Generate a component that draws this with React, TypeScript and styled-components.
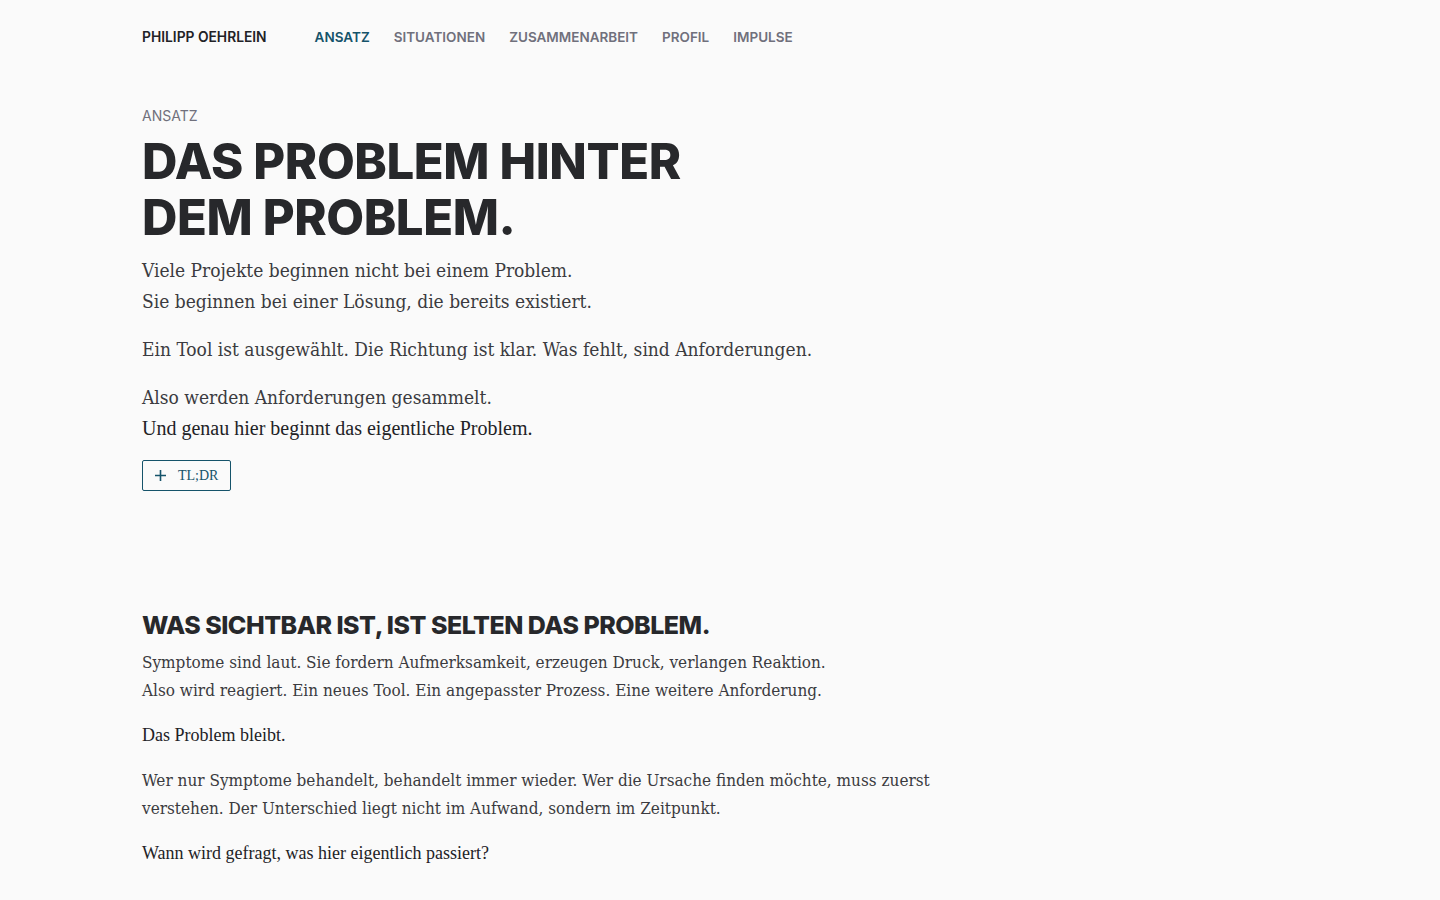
import styled, { createGlobalStyle } from "styled-components";

const GlobalStyle = createGlobalStyle`
    html, body {
        margin: 0;
        padding: 0;
        background: #fafafa;
    }

    body {
        font-family: "DejaVu Serif Condensed", "DejaVu Serif", serif;
        color: #3b3b40;
    }

    * {
        box-sizing: border-box;
    }
`;

const navItems = ["Ansatz", "Situationen", "Zusammenarbeit", "Profil", "Impulse"];

const App = () => {
    return (
        <>
            <GlobalStyle/>
            <Page>
                <Header>
                    <Brand>Philipp Oehrlein</Brand>
                    <Nav>
                        {navItems.map((item, idx) => (
                            <NavLink key={item} $active={idx === 0}>{item}</NavLink>
                        ))}
                    </Nav>
                </Header>

                <Intro>
                    <Eyebrow>Ansatz</Eyebrow>
                    <Headline>Das Problem hinter<br/>dem Problem.</Headline>
                    <Lead>
                        <LeadPara>
                            Viele Projekte beginnen nicht bei einem Problem.<br/>
                            Sie beginnen bei einer Lösung, die bereits existiert.
                        </LeadPara>
                        <LeadPara>
                            Ein Tool ist ausgewählt. Die Richtung ist klar. Was fehlt, sind Anforderungen.
                        </LeadPara>
                        <LeadPara>
                            Also werden Anforderungen gesammelt.<br/>
                            <Emphasis $size={20}>Und genau hier beginnt das eigentliche Problem.</Emphasis>
                        </LeadPara>
                    </Lead>
                    <TldrButton type="button">
                        <svg width="11" height="11" viewBox="0 0 11 11" fill="none">
                            <path d="M5.5 0v11M0 5.5h11" stroke="currentColor" strokeWidth="1.6"/>
                        </svg>
                        TL;DR
                    </TldrButton>
                </Intro>

                <Section>
                    <SectionTitle>Was sichtbar ist, ist selten das Problem.</SectionTitle>
                    <Body>
                        <BodyPara>
                            Symptome sind laut. Sie fordern Aufmerksamkeit, erzeugen Druck, verlangen Reaktion.<br/>
                            Also wird reagiert. Ein neues Tool. Ein angepasster Prozess. Eine weitere Anforderung.
                        </BodyPara>
                        <BodyPara><Emphasis $size={18}>Das Problem bleibt.</Emphasis></BodyPara>
                        <BodyPara>
                            Wer nur Symptome behandelt, behandelt immer wieder. Wer die Ursache finden möchte, muss zuerst
                            verstehen. Der Unterschied liegt nicht im Aufwand, sondern im Zeitpunkt.
                        </BodyPara>
                        <BodyPara><Emphasis $size={18}>Wann wird gefragt, was hier eigentlich passiert?</Emphasis></BodyPara>
                    </Body>
                </Section>
            </Page>
        </>
    );
};

export default App;

const Page = styled.div`
    padding: 0 142px;
    min-height: 900px;
`;

const Header = styled.header`
    display: flex;
    align-items: center;
    height: 74px;
    gap: 48px;
`;

const Brand = styled.div`
    font-family: Inter, "Liberation Sans", sans-serif;
    font-weight: 600;
    font-size: 13.8px;
    text-transform: uppercase;
    color: #222226;
`;

const Nav = styled.nav`
    display: flex;
    gap: 24px;
`;

const NavLink = styled.a<{ $active?: boolean }>`
    font-family: Inter, "Liberation Sans", sans-serif;
    font-weight: 600;
    font-size: 13.5px;
    text-transform: uppercase;
    color: ${({$active}) => ($active ? "#15536a" : "#70707c")};
    cursor: pointer;
`;

const Intro = styled.section`
    padding-top: 33px;
    max-width: 800px;
`;

const Eyebrow = styled.div`
    font-family: Inter, "Liberation Sans", sans-serif;
    font-size: 14px;
    text-transform: uppercase;
    color: #70707c;
    margin-bottom: 10px;
`;

const Headline = styled.h1`
    font-family: Inter, "Liberation Sans", sans-serif;
    font-weight: 800;
    font-size: 49px;
    line-height: 56px;
    letter-spacing: -0.4px;
    text-transform: uppercase;
    color: #27282b;
    margin: 0 0 9px;
`;

const Lead = styled.div`
    display: flex;
    flex-direction: column;
    gap: 17px;
`;

const LeadPara = styled.p`
    margin: 0;
    font-size: 19px;
    line-height: 31px;
    color: #3b3b40;
`;

const Emphasis = styled.span<{ $size: number }>`
    font-family: "Liberation Serif", serif;
    font-size: ${({$size}) => $size}px;
    color: #222226;
`;

const TldrButton = styled.button`
    display: inline-flex;
    align-items: center;
    gap: 12px;
    margin-top: 16px;
    height: 31px;
    padding: 0 12px;
    border: 1px solid #15536a;
    border-radius: 2px;
    background: transparent;
    color: #15536a;
    font-family: "Liberation Serif", serif;
    font-size: 14px;
    cursor: pointer;
`;

const Section = styled.section`
    padding-top: 118px;
    padding-bottom: 40px;
    max-width: 820px;
`;

const SectionTitle = styled.h2`
    font-family: Inter, "Liberation Sans", sans-serif;
    font-weight: 800;
    font-size: 25px;
    line-height: 32px;
    letter-spacing: -0.5px;
    text-transform: uppercase;
    color: #27282b;
    margin: 0 0 7px;
`;

const Body = styled.div`
    display: flex;
    flex-direction: column;
    gap: 17px;
`;

const BodyPara = styled.p`
    margin: 0;
    font-size: 17px;
    line-height: 28px;
    color: #3b3b40;
`;
